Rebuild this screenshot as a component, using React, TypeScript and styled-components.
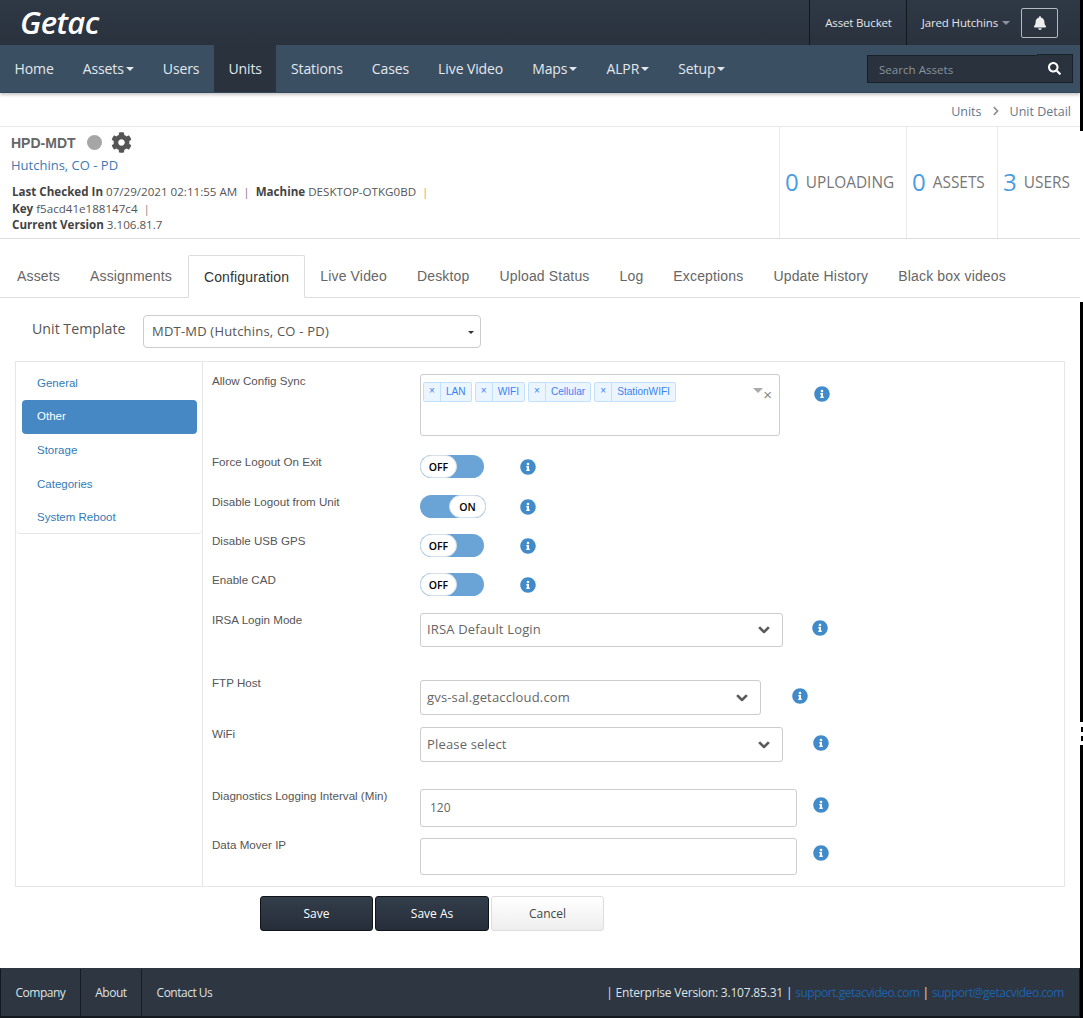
import React from "react";
import styled, { createGlobalStyle } from "styled-components";
import { FaBell, FaChevronDown, FaChevronRight, FaCog, FaInfoCircle, FaSearch } from "react-icons/fa";

const Global = createGlobalStyle`
  html, body { margin: 0; padding: 0; background: #fff; }
  * { box-sizing: border-box; }
`;
const OPEN = `"Open Sans", "Liberation Sans", sans-serif`;
const ARIAL = `"Liberation Sans", Arial, sans-serif`;

const Page = styled.div`
  position: relative; width: 1083px; height: 1018px; overflow: hidden;
  padding-right: 3px; display: flex; flex-direction: column; font-family: ${OPEN}; color: #555;
`;
const EdgeStrip = styled.div<{ $top: number; $height: number; $width?: number }>`
  position: absolute; right: 0; width: ${p => p.$width ?? 3}px; background: #000;
  top: ${p => p.$top}px; height: ${p => p.$height}px;
`;
const TopBar = styled.header`
  height: 45px; flex: none; background: linear-gradient(#2f3945, #29323d);
  display: flex; align-items: stretch; justify-content: space-between;
`;
const Logo = styled.div`
  font: italic 600 31px/44px ${OPEN}; color: #fff; padding-left: 20px; letter-spacing: -.6px;
`;
const TopRight = styled.div`display: flex; align-items: center; padding-right: 22px;`;
const TopLink = styled.div`
  height: 45px; display: flex; align-items: center; border-left: 1px solid #12181f;
  padding: 0 14px 0 15px; font-size: 11.5px; color: #e2e6ea; gap: 4px; letter-spacing: -.15px;
  &:nth-child(2) { padding-right: 11px; }
`;
const SmallCaret = styled.span`
  width: 0; height: 0; border: 4px solid transparent; border-top-color: #8b939c; border-bottom: 0;
`;
const BellButton = styled.div`
  width: 37px; height: 30px; border: 1px solid #b4b9bf; border-radius: 2px;
  display: flex; align-items: center; justify-content: center; color: #eee; font-size: 14px;
`;
const NavBar = styled.nav`
  height: 48px; flex: none; background: #3b4f63; display: flex; align-items: stretch;
  justify-content: space-between; box-shadow: 0 2px 3px rgba(0,0,0,.22); position: relative;
  border-bottom: 1px solid #33465a;
`;
const NavList = styled.div`display: flex; align-items: stretch;`;
const NavItem = styled.div<{ $active?: boolean }>`
  display: flex; align-items: center; gap: 2px; padding: 0 14.5px; font-size: 14px; color: #e3e8ed;
  letter-spacing: -.1px; background: ${p => (p.$active ? "#29323d" : "transparent")};
`;
const NavCaret = styled.span`
  width: 0; height: 0; border: 4px solid transparent; border-top-color: #e3e8ed; border-bottom: 0; margin-top: 1px;
`;
const SearchBox = styled.div`
  display: flex; align-items: center; width: 206px; height: 28px; margin: 10px 7px 0 0;
  background: #29323d; border: 1px solid #192029; position: relative;
`;
const SearchText = styled.span`flex: 1; padding-left: 11px; font-size: 11.6px; color: #8a929b;`;
const SearchButton = styled.div`
  width: 36px; height: 29px; margin: -2px -1px 0 0; display: flex; align-items: center; justify-content: center;
  background: #29323d; border: 1px solid #192029; border-left: 0; color: #fff; font-size: 13px;
`;
const Crumbs = styled.div`
  height: 34px; flex: none; display: flex; align-items: center; justify-content: flex-end; gap: 9px;
  padding: 3px 9px 0 0; font-size: 12.5px; color: #65788c; border-bottom: 1px solid #e9e9e9;
`;
const CrumbArrow = styled.span`color: #8f8a86; font-size: 10px; display: flex;`;
const Summary = styled.section`
  height: 112px; flex: none; display: flex; border-bottom: 1px solid #ddd;
`;
const SummaryInfo = styled.div`flex: 1; padding: 5px 0 0 11px;`;
const UnitTitle = styled.div`display: flex; align-items: center; height: 21px; color: #666;`;
const UnitName = styled.span`font: bold 14px ${ARIAL}; margin-right: 11px;`;
const StatusDot = styled.span`
  width: 15px; height: 15px; border-radius: 50%; background: #a6a6a6; margin-right: 9px;
`;
const GearIcon = styled(FaCog)`font-size: 21px; color: #555;`;
const UnitLink = styled.div`font-size: 13px; line-height: 18px; color: #3d7ab5; margin: 3px 0 10px;`;
const DetailLine = styled.div`
  font-size: 11.6px; line-height: 16.5px; color: #555; padding-left: 1px;
  b { color: #444; font-weight: 700; }
`;
const Pipe = styled.span<{ $color?: string }>`color: ${p => p.$color ?? "#a0708a"}; margin: 0 3px;`;
const Stat = styled.div<{ $width: number }>`
  width: ${p => p.$width}px; border-left: 1px solid #eaeaea; display: flex; align-items: center;
  padding: 0 0 2px 5px; gap: 7px;
`;
const StatValue = styled.span`font-size: 24px; color: #4a9de0; line-height: 1;`;
const StatLabel = styled.span`font-size: 15.4px; color: #777; text-transform: uppercase; margin-top: 1px;`;
const TabBar = styled.div`
  flex: none; margin-top: 16px; height: 43px; display: flex; padding-left: 2px;
  border-bottom: 1px solid #ddd; font: 14px ${ARIAL}; letter-spacing: .16px;
`;
const Tab = styled.div<{ $active?: boolean }>`
  height: ${p => (p.$active ? "43px" : "42px")}; padding: 0 15px; display: flex; align-items: center;
  color: ${p => (p.$active ? "#333" : "#666")}; background: #fff;
  ${p => p.$active
    ? "border: 1px solid #ddd; border-bottom-color: #fff; margin: 0 0 0 1px; border-radius: 2px 2px 0 0;"
    : ""}
`;
const TemplateRow = styled.div`
  flex: none; display: flex; align-items: center; margin-top: 17px; padding-left: 32px; height: 33px;
`;
const TemplateLabel = styled.span`width: 111px; font-size: 14.2px; color: #555; margin-top: -6px;`;
const TemplateSelect = styled.div`
  width: 338px; height: 33px; border: 1px solid #ccc; border-radius: 4px; display: flex; align-items: center;
  justify-content: space-between; padding: 0 6px 2px 8px; font-size: 13px; color: #555; letter-spacing: .2px;
`;
const BlackCaret = styled.span`
  width: 0; height: 0; border: 3.5px solid transparent; border-top-color: #333; border-bottom: 0; margin-top: 4px;
`;
const Panel = styled.div`
  flex: none; margin: 13px 15px 0; height: 526px; border: 1px solid #e6e6e6; display: flex;
`;
const Side = styled.aside`
  width: 186px; height: 172px; padding: 5px 5px 0 6px; border-bottom: 1px solid #e6e6e6;
  border-radius: 0 0 4px 4px; font: 11.5px ${ARIAL}; flex: none;
`;
const SideItem = styled.div<{ $active?: boolean; $h: number }>`
  height: ${p => p.$h}px; display: flex; align-items: center; padding: 0 0 2px 15px; border-radius: 4px;
  color: ${p => (p.$active ? "#fff" : "#337ab7")}; background: ${p => (p.$active ? "#4688c4" : "transparent")};
`;
const FormArea = styled.div`
  flex: 1; border-left: 1px solid #e6e6e6; padding: 12px 0 0 9px; font: 11.6px ${ARIAL}; color: #555;
`;
const FormRow = styled.div<{ $h: number }>`
  height: ${p => p.$h}px; display: flex; align-items: flex-start;
`;
const FieldLabel = styled.label<{ $shift?: number }>`
  width: 208px; flex: none; margin-top: ${p => p.$shift ?? 0}px; line-height: 14px; color: #555;
`;
const InfoIcon = styled(FaInfoCircle)<{ $left: number; $top: number }>`
  flex: none; font-size: 16px; color: #428bca; margin-left: ${p => p.$left}px; margin-top: ${p => p.$top}px;
`;
const TagBox = styled.div`
  width: 360px; height: 62px; border: 1px solid #ccc; border-radius: 3px; padding: 7px 2px; position: relative;
  display: flex; gap: 3px; align-items: flex-start;
`;
const Tag = styled.div`
  height: 20px; display: flex; align-items: stretch; border: 1px solid #c2e0ff; border-radius: 2px;
  background: #ebf5ff; color: #3b82f6; font: 10.1px/18px ${ARIAL};
`;
const TagX = styled.span`
  width: 17px; text-align: center; border-right: 1px solid #c2e0ff; line-height: 15px; font-size: 10px;
`;
const TagText = styled.span`padding: 0 5px;`;
const BoxCaret = styled.span`
  position: absolute; top: 13px; right: 16px; width: 0; height: 0; border: 5px solid transparent;
  border-top-color: #aaa; border-bottom: 0;
`;
const BoxClear = styled.span`
  position: absolute; top: 12px; right: 7px; font: 15px/15px ${ARIAL}; color: #888;
`;
const ToggleTrack = styled.div<{ $on?: boolean }>`
  width: ${p => (p.$on ? 66 : 64)}px; height: 23px; border-radius: 12px; background: #6aa3d5;
  display: flex; justify-content: ${p => (p.$on ? "flex-end" : "flex-start")};
`;
const ToggleKnob = styled.div`
  width: 37px; height: 23px; border-radius: 12px; background: #fff; border: 1px solid #d5e1ec;
  display: flex; align-items: center; justify-content: center;
  font: 600 10.5px ${OPEN}; color: #000;
`;
const SelectBox = styled.div<{ $w: number; $h: number }>`
  width: ${p => p.$w}px; height: ${p => p.$h}px; flex: none; border: 1px solid #ccc; border-radius: 3px;
  display: flex; align-items: center; justify-content: space-between; padding: 0 12px 2px 6px;
  font: 13px ${OPEN}; letter-spacing: .17px; color: #666;
  svg { color: #555; font-size: 12px; stroke: currentColor; stroke-width: 40px; margin-top: 2px; }
`;
const TextBox = styled.div<{ $h: number }>`
  width: 377px; height: ${p => p.$h}px; flex: none; border: 1px solid #ccc; border-radius: 3px;
  display: flex; align-items: center; padding: 0 9px 2px; font: 12px ${OPEN}; color: #666;
`;
const Actions = styled.div`flex: none; display: flex; gap: 2px; margin: 9px 0 0 260px;`;
const Button = styled.div<{ $w: number; $light?: boolean }>`
  width: ${p => p.$w}px; height: 35px; border-radius: 3px; display: flex; align-items: center; justify-content: center;
  font-size: 12px;
  ${p => p.$light
    ? "background: linear-gradient(#fff, #eee); border: 1px solid #ddd; color: #444;"
    : "background: linear-gradient(#333e4b, #262e39); border: 1px solid #101419; color: #fff;"}
`;
const Footer = styled.footer`
  flex: none; margin-top: 37px; height: 50px; background: #2d3641;
  border: 1px solid #14191f; border-top-color: #2d3641; border-bottom-width: 2px;
  display: flex; justify-content: space-between; align-items: stretch;
  color: #dfe3e7; font-size: 12px;
`;
const FootLinks = styled.div`display: flex; letter-spacing: -.5px;`;
const FootLink = styled.div`
  display: flex; align-items: center; padding: 0 14.5px 1px; & + & { border-left: 1px solid #171c22; }
`;
const FootInfo = styled.div`
  display: flex; align-items: center; padding: 0 15px 1px 0; white-space: pre; letter-spacing: -.2px;
`;
const FootAnchor = styled.span`color: #1f62ad; letter-spacing: -.47px;`;

const nav: [string, boolean?][] = [
  ["Home"], ["Assets", true], ["Users"], ["Units"], ["Stations"], ["Cases"],
  ["Live Video"], ["Maps", true], ["ALPR", true], ["Setup", true],
];
const tabs = ["Assets", "Assignments", "Configuration", "Live Video", "Desktop", "Upload Status", "Log", "Exceptions", "Update History", "Black box videos"];
const side: [string, number][] = [["General", 33], ["Other", 34], ["Storage", 34], ["Categories", 33], ["System Reboot", 33]];

const Toggle = ({ on }: { on?: boolean }) => (
  <ToggleTrack $on={on}><ToggleKnob>{on ? "ON" : "OFF"}</ToggleKnob></ToggleTrack>
);

export default function App() {
  return (
    <Page>
      <Global />
      <TopBar>
        <Logo>Getac</Logo>
        <TopRight>
          <TopLink>Asset Bucket</TopLink>
          <TopLink>Jared Hutchins <SmallCaret /></TopLink>
          <BellButton><FaBell /></BellButton>
        </TopRight>
      </TopBar>
      <NavBar>
        <NavList>
          {nav.map(([n, c]) => (
            <NavItem key={n} $active={n === "Units"}>{n}{c && <NavCaret />}</NavItem>
          ))}
        </NavList>
        <SearchBox>
          <SearchText>Search Assets</SearchText>
          <SearchButton><FaSearch /></SearchButton>
        </SearchBox>
      </NavBar>
      <Crumbs>
        <span>Units</span><CrumbArrow><FaChevronRight /></CrumbArrow><span>Unit Detail</span>
      </Crumbs>
      <Summary>
        <SummaryInfo>
          <UnitTitle><UnitName>HPD-MDT</UnitName><StatusDot /><GearIcon /></UnitTitle>
          <UnitLink>Hutchins, CO - PD</UnitLink>
          <DetailLine>
            <b>Last Checked In</b> 07/29/2021 02:11:55 AM <Pipe>|</Pipe> <b>Machine</b> DESKTOP-OTKG0BD <Pipe $color="#c9a870">|</Pipe>
          </DetailLine>
          <DetailLine><b>Key</b> f5acd41e188147c4 <Pipe $color="#888">|</Pipe></DetailLine>
          <DetailLine><b>Current Version</b> 3.106.81.7</DetailLine>
        </SummaryInfo>
        <Stat $width={127}><StatValue>0</StatValue><StatLabel>Uploading</StatLabel></Stat>
        <Stat $width={91}><StatValue>0</StatValue><StatLabel>Assets</StatLabel></Stat>
        <Stat $width={83}><StatValue>3</StatValue><StatLabel>Users</StatLabel></Stat>
      </Summary>
      <TabBar>
        {tabs.map(t => <Tab key={t} $active={t === "Configuration"}>{t}</Tab>)}
      </TabBar>
      <TemplateRow>
        <TemplateLabel>Unit Template</TemplateLabel>
        <TemplateSelect>MDT-MD (Hutchins, CO - PD)<BlackCaret /></TemplateSelect>
      </TemplateRow>
      <Panel>
        <Side>
          {side.map(([s, h]) => <SideItem key={s} $h={h} $active={s === "Other"}>{s}</SideItem>)}
        </Side>
        <FormArea>
          <FormRow $h={81}>
            <FieldLabel>Allow Config Sync</FieldLabel>
            <TagBox>
              {["LAN", "WIFI", "Cellular", "StationWIFI"].map(t => (
                <Tag key={t}><TagX>×</TagX><TagText>{t}</TagText></Tag>
              ))}
              <BoxCaret /><BoxClear>×</BoxClear>
            </TagBox>
            <InfoIcon $left={34} $top={12} />
          </FormRow>
          <FormRow $h={40}>
            <FieldLabel>Force Logout On Exit</FieldLabel>
            <Toggle /><InfoIcon $left={36} $top={4} />
          </FormRow>
          <FormRow $h={39}>
            <FieldLabel>Disable Logout from Unit</FieldLabel>
            <Toggle on /><InfoIcon $left={34} $top={4} />
          </FormRow>
          <FormRow $h={39}>
            <FieldLabel>Disable USB GPS</FieldLabel>
            <Toggle /><InfoIcon $left={36} $top={4} />
          </FormRow>
          <FormRow $h={40}>
            <FieldLabel>Enable CAD</FieldLabel>
            <Toggle /><InfoIcon $left={36} $top={4} />
          </FormRow>
          <FormRow $h={67}>
            <FieldLabel>IRSA Login Mode</FieldLabel>
            <SelectBox $w={363} $h={34}>IRSA Default Login<FaChevronDown /></SelectBox>
            <InfoIcon $left={29} $top={7} />
          </FormRow>
          <FormRow $h={47}>
            <FieldLabel $shift={-4}>FTP Host</FieldLabel>
            <SelectBox $w={341} $h={35}>gvs-sal.getaccloud.com<FaChevronDown /></SelectBox>
            <InfoIcon $left={31} $top={8} />
          </FormRow>
          <FormRow $h={62}>
            <FieldLabel>WiFi</FieldLabel>
            <SelectBox $w={363} $h={35}>Please select<FaChevronDown /></SelectBox>
            <InfoIcon $left={30} $top={8} />
          </FormRow>
          <FormRow $h={49}>
            <FieldLabel>Diagnostics Logging Interval (Min)</FieldLabel>
            <TextBox $h={38}>120</TextBox>
            <InfoIcon $left={16} $top={8} />
          </FormRow>
          <FormRow $h={37}>
            <FieldLabel>Data Mover IP</FieldLabel>
            <TextBox $h={37} />
            <InfoIcon $left={16} $top={7} />
          </FormRow>
        </FormArea>
      </Panel>
      <Actions>
        <Button $w={113}>Save</Button>
        <Button $w={114}>Save As</Button>
        <Button $w={113} $light>Cancel</Button>
      </Actions>
      <Footer>
        <FootLinks>
          <FootLink>Company</FootLink><FootLink>About</FootLink><FootLink>Contact Us</FootLink>
        </FootLinks>
        <FootInfo>| Enterprise Version: 3.107.85.31 | <FootAnchor>support.getacvideo.com</FootAnchor> | <FootAnchor>support@getacvideo.com</FootAnchor></FootInfo>
      </Footer>
      <EdgeStrip $top={0} $height={131} />
      <EdgeStrip $top={302} $height={420} />
      <EdgeStrip $top={727} $height={5} $width={2} />
      <EdgeStrip $top={736} $height={5} $width={2} />
      <EdgeStrip $top={745} $height={273} />
    </Page>
  );
}
